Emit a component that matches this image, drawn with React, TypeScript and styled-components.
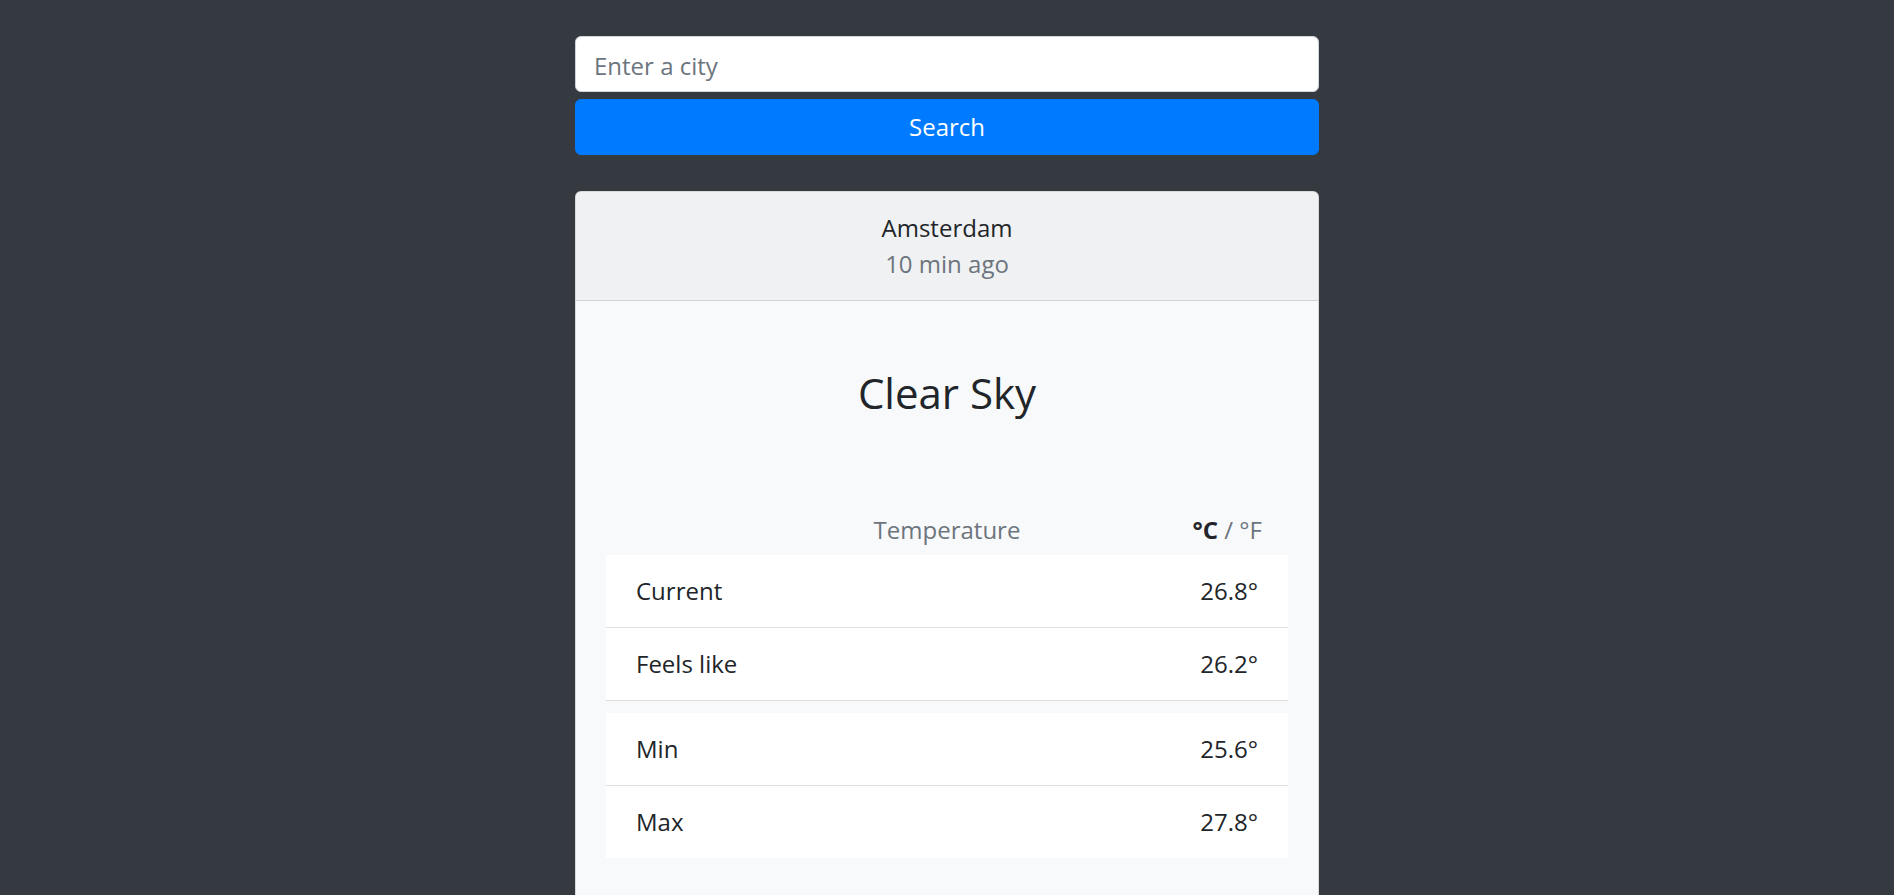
import React from "react";
import styled, { createGlobalStyle } from "styled-components";

const Global = createGlobalStyle`
  html, body { margin: 0; padding: 0; }
  body {
    background: #343a40;
    font-family: "Segoe UI", "Open Sans", "Noto Sans", sans-serif;
    color: #212529;
    font-size: 24px;
    line-height: 1.5;
  }
  * { box-sizing: border-box; }
`;

const Page = styled.main`
  width: 744px;
  margin: 0 auto;
  padding-top: 36px;
`;

const SearchForm = styled.form`
  display: flex;
  flex-direction: column;
  gap: 7px;
  margin-bottom: 36px;
`;

const Input = styled.input`
  height: 56px;
  padding: 2px 18px 0;
  font: inherit;
  color: #495057;
  background: #fff;
  border: 1px solid #ced4da;
  border-radius: 6px;
  outline: none;
  &::placeholder { color: #6c757d; }
`;

const Button = styled.button`
  height: 56px;
  padding: 0;
  font: inherit;
  color: #fff;
  background: #007bff;
  border: 1px solid #007bff;
  border-radius: 6px;
  cursor: pointer;
`;

const Card = styled.section`
  background: #f8f9fa;
  border: 1px solid rgba(0, 0, 0, 0.125);
  border-radius: 6px;
  overflow: hidden;
`;

const CardHeader = styled.header`
  padding: 18px 30px;
  text-align: center;
  background: rgba(0, 0, 0, 0.03);
  border-bottom: 1px solid rgba(0, 0, 0, 0.125);
`;

const City = styled.div`
  color: #212529;
`;

const Muted = styled.div`
  color: #6c757d;
`;

const CardBody = styled.div`
  padding: 30px;
`;

const Condition = styled.h3`
  margin: 37px 0 94px;
  font-size: 42px;
  font-weight: 400;
  line-height: 1.2;
  text-align: center;
`;

const TableHead = styled.div`
  display: grid;
  grid-template-columns: 1fr auto 1fr;
  align-items: center;
  margin-bottom: 7px;
  color: #6c757d;
`;

const Units = styled.div`
  justify-self: end;
  padding-right: 26px;
  strong { color: #212529; font-weight: 700; }
`;

const ListGroup = styled.ul<{ $bordered?: boolean }>`
  list-style: none;
  margin: 0 0 12px;
  padding: 0;
  background: #fff;
  & > li:not(:last-child) { border-bottom: 1px solid rgba(0, 0, 0, 0.125); }
  ${(p) => (p.$bordered ? "& > li:last-child { border-bottom: 1px solid rgba(0, 0, 0, 0.125); }" : "")}
`;

const Row = styled.li`
  display: flex;
  justify-content: space-between;
  align-items: center;
  padding: 18px 30px;
`;

const groups = [
  { bordered: true, rows: [["Current", "26.8°"], ["Feels like", "26.2°"]] },
  { bordered: false, rows: [["Min", "25.6°"], ["Max", "27.8°"]] },
];

export default function App() {
  return (
    <>
      <Global />
      <Page>
        <SearchForm onSubmit={(e) => e.preventDefault()}>
          <Input placeholder="Enter a city" />
          <Button type="submit">Search</Button>
        </SearchForm>
        <Card>
          <CardHeader>
            <City>Amsterdam</City>
            <Muted>10 min ago</Muted>
          </CardHeader>
          <CardBody>
            <Condition>Clear Sky</Condition>
            <TableHead>
              <span />
              <span>Temperature</span>
              <Units>
                <strong>°C</strong> / °F
              </Units>
            </TableHead>
            {groups.map((g, i) => (
              <ListGroup key={i} $bordered={g.bordered}>
                {g.rows.map(([label, value]) => (
                  <Row key={label}>
                    <span>{label}</span>
                    <span>{value}</span>
                  </Row>
                ))}
              </ListGroup>
            ))}
          </CardBody>
        </Card>
      </Page>
    </>
  );
}
